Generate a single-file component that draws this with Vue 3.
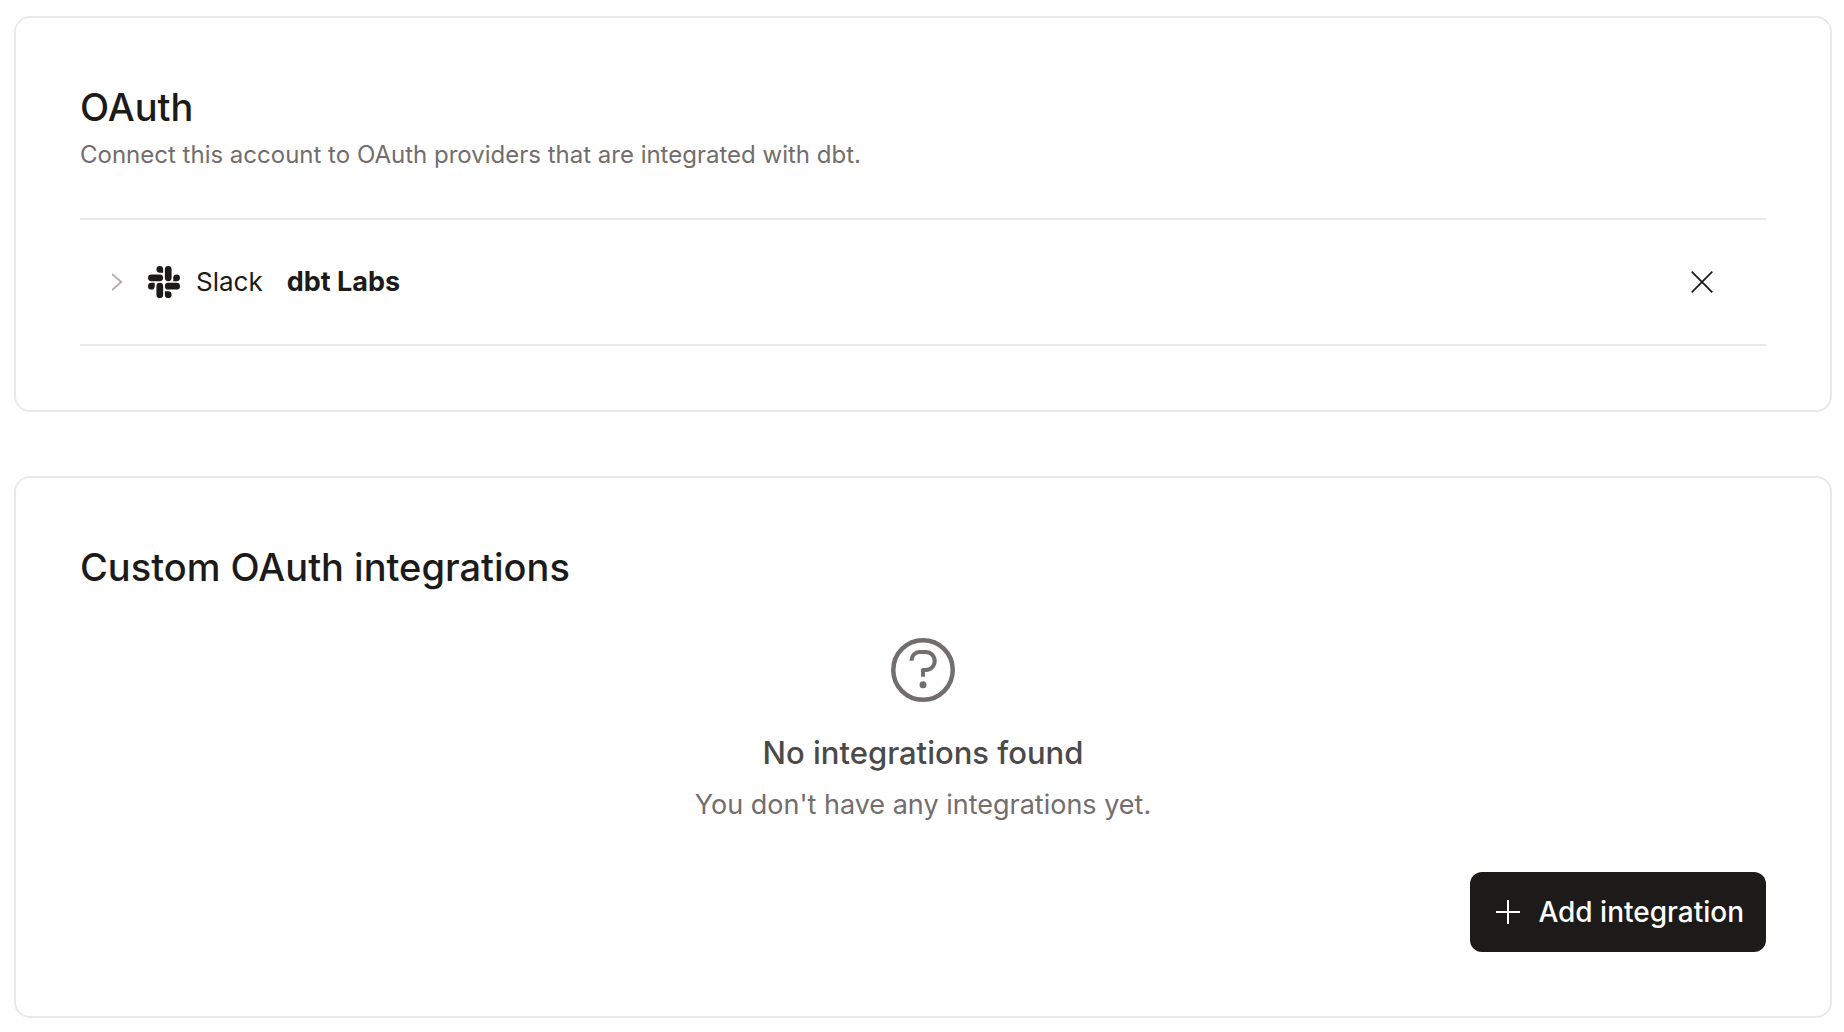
<script setup>
import { ref } from 'vue'

const connections = ref([{ id: 'slack', provider: 'Slack', workspace: 'dbt Labs' }])
</script>

<template>
  <main class="page">
    <section class="card" aria-labelledby="oauth-title">
      <h2 id="oauth-title" class="title">OAuth</h2>
      <p class="description">Connect this account to OAuth providers that are integrated with dbt.</p>
      <ul class="connections">
        <li v-for="item in connections" :key="item.id" class="connection">
          <button class="icon-button expand" type="button" :aria-label="`Expand ${item.provider}`">
            <svg width="12" height="20" viewBox="0 0 12 20" fill="none" stroke="currentColor" stroke-width="2">
              <path d="M0 2l9.200 8L0 18" />
            </svg>
          </button>
          <svg class="logo" width="32" height="32" viewBox="0 0 24 24" fill="currentColor" aria-hidden="true">
            <path d="M5.042 15.165a2.528 2.528 0 0 1-2.52 2.523A2.528 2.528 0 0 1 0 15.165a2.527 2.527 0 0 1 2.522-2.52h2.52v2.52zM6.313 15.165a2.527 2.527 0 0 1 2.521-2.52 2.527 2.527 0 0 1 2.521 2.52v6.313A2.528 2.528 0 0 1 8.834 24a2.528 2.528 0 0 1-2.521-2.522v-6.313zM8.834 5.042a2.528 2.528 0 0 1-2.521-2.52A2.528 2.528 0 0 1 8.834 0a2.528 2.528 0 0 1 2.521 2.522v2.52H8.834zM8.834 6.313a2.528 2.528 0 0 1 2.521 2.521 2.528 2.528 0 0 1-2.521 2.521H2.522A2.528 2.528 0 0 1 0 8.834a2.528 2.528 0 0 1 2.522-2.521h6.312zM18.956 8.834a2.528 2.528 0 0 1 2.522-2.521A2.528 2.528 0 0 1 24 8.834a2.528 2.528 0 0 1-2.522 2.521h-2.522V8.834zM17.688 8.834a2.528 2.528 0 0 1-2.523 2.521 2.527 2.527 0 0 1-2.520-2.521V2.522A2.527 2.527 0 0 1 15.165 0a2.528 2.528 0 0 1 2.523 2.522v6.312zM15.165 18.956a2.528 2.528 0 0 1 2.523 2.522A2.528 2.528 0 0 1 15.165 24a2.527 2.527 0 0 1-2.520-2.522v-2.522h2.520zM15.165 17.688a2.527 2.527 0 0 1-2.520-2.523 2.526 2.526 0 0 1 2.520-2.520h6.313A2.527 2.527 0 0 1 24 15.165a2.528 2.528 0 0 1-2.522 2.523h-6.313z" />
          </svg>
          <span class="provider">{{ item.provider }}</span>
          <strong class="workspace">{{ item.workspace }}</strong>
          <button class="icon-button remove" type="button" :aria-label="`Disconnect ${item.provider}`">
            <svg width="24" height="24" viewBox="0 0 24 24" fill="none" stroke="currentColor" stroke-width="1.700">
              <path d="M1.700 1.700l20.600 20.600M22.300 1.700l-20.600 20.600" />
            </svg>
          </button>
        </li>
      </ul>
    </section>

    <section class="card" aria-labelledby="custom-title">
      <h2 id="custom-title" class="title">Custom OAuth integrations</h2>
      <div class="empty">
        <svg class="empty-icon" width="64" height="64" viewBox="0 0 64 64" fill="none" stroke="currentColor" stroke-width="4.500" aria-hidden="true">
          <circle cx="32" cy="32" r="29.750" />
          <path d="M20.600 22.700V22a8 8 0 0 1 8-8h6.100a9 9 0 0 1 0 18H32v6.700" stroke-width="4" stroke-linejoin="round" />
          <circle cx="32" cy="46.700" r="3.500" fill="currentColor" stroke="none" />
        </svg>
        <h3 class="empty-title">No integrations found</h3>
        <p class="empty-text">You don't have any integrations yet.</p>
      </div>
      <div class="actions">
        <button class="primary" type="button">
          <svg width="24" height="24" viewBox="0 0 24 24" fill="none" stroke="currentColor" stroke-width="2" aria-hidden="true">
            <path d="M12 0v24M0 12h24" />
          </svg>
          Add integration
        </button>
      </div>
    </section>
  </main>
</template>

<style>
body {
  background: #fff;
}
</style>

<style scoped>
.page {
  display: flex;
  flex-direction: column;
  gap: 64px;
  padding: 16px 12px 14px 14px;
  font-family: Inter, "Liberation Sans", sans-serif;
  color: #1c1b19;
}

.card {
  padding: 64px;
  border: 2px solid #e9e9e9;
  border-radius: 16px;
}

.title {
  margin: 0;
  font-size: 38px;
  font-weight: 500;
  line-height: 50px;
}

.description {
  margin: 6px 0 46px;
  font-size: 24px;
  line-height: 34px;
  color: #736d6d;
}

.connections {
  margin: 0;
  padding: 0;
  list-style: none;
  border-top: 2px solid #e9e9e9;
}

.connection {
  display: flex;
  align-items: center;
  height: 124px;
  padding: 0 52px 0 32px;
  border-bottom: 2px solid #e9e9e9;
  font-size: 26px;
  line-height: 34px;
}

.icon-button {
  display: flex;
  padding: 0;
  border: 0;
  background: none;
  color: inherit;
  cursor: pointer;
}

.expand {
  color: #b5afaf;
}

.logo {
  margin: 0 16px 0 24px;
}

.workspace {
  margin-left: 24px;
  font-size: 27px;
  font-weight: 700;
}

.remove {
  margin-left: auto;
}

.empty {
  display: flex;
  flex-direction: column;
  align-items: center;
  margin: 46px 0;
  line-height: 42px;
}

.empty-icon {
  color: #736d6d;
}

.empty-title {
  margin: 30px 0 10px;
  font-size: 31px;
  font-weight: 500;
  color: #4b4a49;
}

.empty-text {
  margin: 0;
  font-size: 27px;
  color: #736d6d;
}

.actions {
  display: flex;
  justify-content: flex-end;
}

.primary {
  display: flex;
  align-items: center;
  gap: 18px;
  height: 80px;
  padding: 0 22px 0 26px;
  border: 0;
  border-radius: 12px;
  background: #1c1b19;
  color: #fff;
  font-family: inherit;
  font-size: 28px;
  font-weight: 500;
  cursor: pointer;
}
</style>
